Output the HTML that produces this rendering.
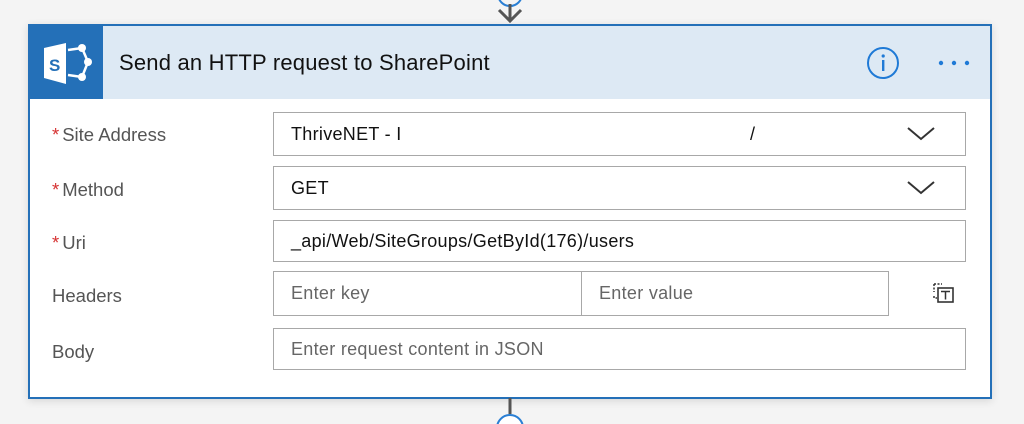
<!DOCTYPE html>
<html><head><style>
body{margin:0;width:1024px;height:424px;background:#f4f4f4;position:relative;overflow:hidden;font-family:"Liberation Sans",sans-serif;}
.card{position:absolute;left:28px;top:24px;width:960px;height:371px;border:2px solid #2470b8;background:#fff;box-shadow:0 2px 8px rgba(0,0,0,.12);}
.hdr{position:absolute;left:0;top:0;right:0;height:73px;background:#dde9f4;}
.ico{position:absolute;left:0;top:0;width:73px;height:73px;background:#2470b8;}
.title{position:absolute;left:89px;top:24px;font-size:22px;color:#111;letter-spacing:0.2px;}
.lbl{position:absolute;left:22px;font-size:18.5px;color:#555;}
.lbl b{color:#d63333;font-weight:normal;margin-right:3px;}
.box{position:absolute;border:1px solid #a8a8a8;box-sizing:border-box;font-size:18px;color:#111;padding-left:17px;display:flex;align-items:center;letter-spacing:0.3px;}
.ph{color:#666;}
</style></head><body>
<svg style="position:absolute;left:490px;top:0" width="40" height="24"><circle cx="20" cy="-6" r="12" fill="none" stroke="#2a7fd4" stroke-width="2"/><path d="M20 4V21M9 10L20 21L31 10" stroke="#555" stroke-width="3" fill="none"/></svg>
<div class="card">
<div class="hdr">
<div class="ico"><svg width="73" height="73"><path d="M14 22L36 17V58L14 52Z" fill="#fff"/><text x="19" y="45" font-size="17" font-weight="bold" fill="#2470b8" font-family="Liberation Sans">S</text><path d="M38 24L52 22M52 22L58 36L52 51M52 51L38 49" stroke="#fff" stroke-width="2.5" fill="none"/><circle cx="52" cy="22" r="4" fill="#fff"/><circle cx="58" cy="36" r="4" fill="#fff"/><circle cx="52" cy="51" r="4" fill="#fff"/></svg></div>
<div class="title">Send an HTTP request to SharePoint</div>
<svg style="position:absolute;left:836px;top:20px" width="34" height="34"><circle cx="17" cy="17" r="15" fill="none" stroke="#1f7ad6" stroke-width="2"/><rect x="16" y="14" width="2.4" height="11" fill="#1f7ad6"/><circle cx="17.2" cy="10" r="1.6" fill="#1f7ad6"/></svg>
<svg style="position:absolute;left:906px;top:32px" width="36" height="10"><circle cx="5" cy="5" r="2.2" fill="#1f7ad6"/><circle cx="18" cy="5" r="2.2" fill="#1f7ad6"/><circle cx="31" cy="5" r="2.2" fill="#1f7ad6"/></svg>
</div>
<div class="lbl" style="top:98px"><b>*</b>Site Address</div>
<div class="lbl" style="top:153px"><b>*</b>Method</div>
<div class="lbl" style="top:206px"><b>*</b>Uri</div>
<div class="lbl" style="top:259px">Headers</div>
<div class="lbl" style="top:315px">Body</div>
<div class="box" style="left:243px;top:86px;width:693px;height:44px">ThriveNET - I<span style="position:absolute;left:476px">/</span></div>
<div class="box" style="left:243px;top:140px;width:693px;height:44px">GET</div>
<svg style="position:absolute;left:876px;top:99px" width="32" height="18"><path d="M2 3L15 14L28 3" stroke="#333" stroke-width="2" fill="none"/></svg>
<svg style="position:absolute;left:876px;top:153px" width="32" height="18"><path d="M2 3L15 14L28 3" stroke="#333" stroke-width="2" fill="none"/></svg>
<div class="box" style="left:243px;top:194px;width:693px;height:42px">_api/Web/SiteGroups/GetById(176)/users</div>
<div class="box ph" style="left:243px;top:245px;width:309px;height:45px">Enter key</div>
<div class="box ph" style="left:551px;top:245px;width:308px;height:45px">Enter value</div>
<svg style="position:absolute;left:900px;top:254px" width="28" height="26"><path d="M4 4H12M4 4V12M4 16V18H7" stroke="#333" stroke-width="1.5" stroke-dasharray="2 1.5" fill="none"/><rect x="8" y="8" width="15" height="14" fill="none" stroke="#333" stroke-width="1.6"/><path d="M11 11.5H20M15.5 11.5V19.5" stroke="#333" stroke-width="1.5"/></svg>
<div class="box ph" style="left:243px;top:302px;width:693px;height:42px">Enter request content in JSON</div>
</div>
<svg style="position:absolute;left:490px;top:398px" width="40" height="26"><path d="M20 0V16" stroke="#555" stroke-width="3"/><circle cx="20" cy="30" r="13" fill="#fff" stroke="#2a7fd4" stroke-width="2"/></svg>
</body></html>
